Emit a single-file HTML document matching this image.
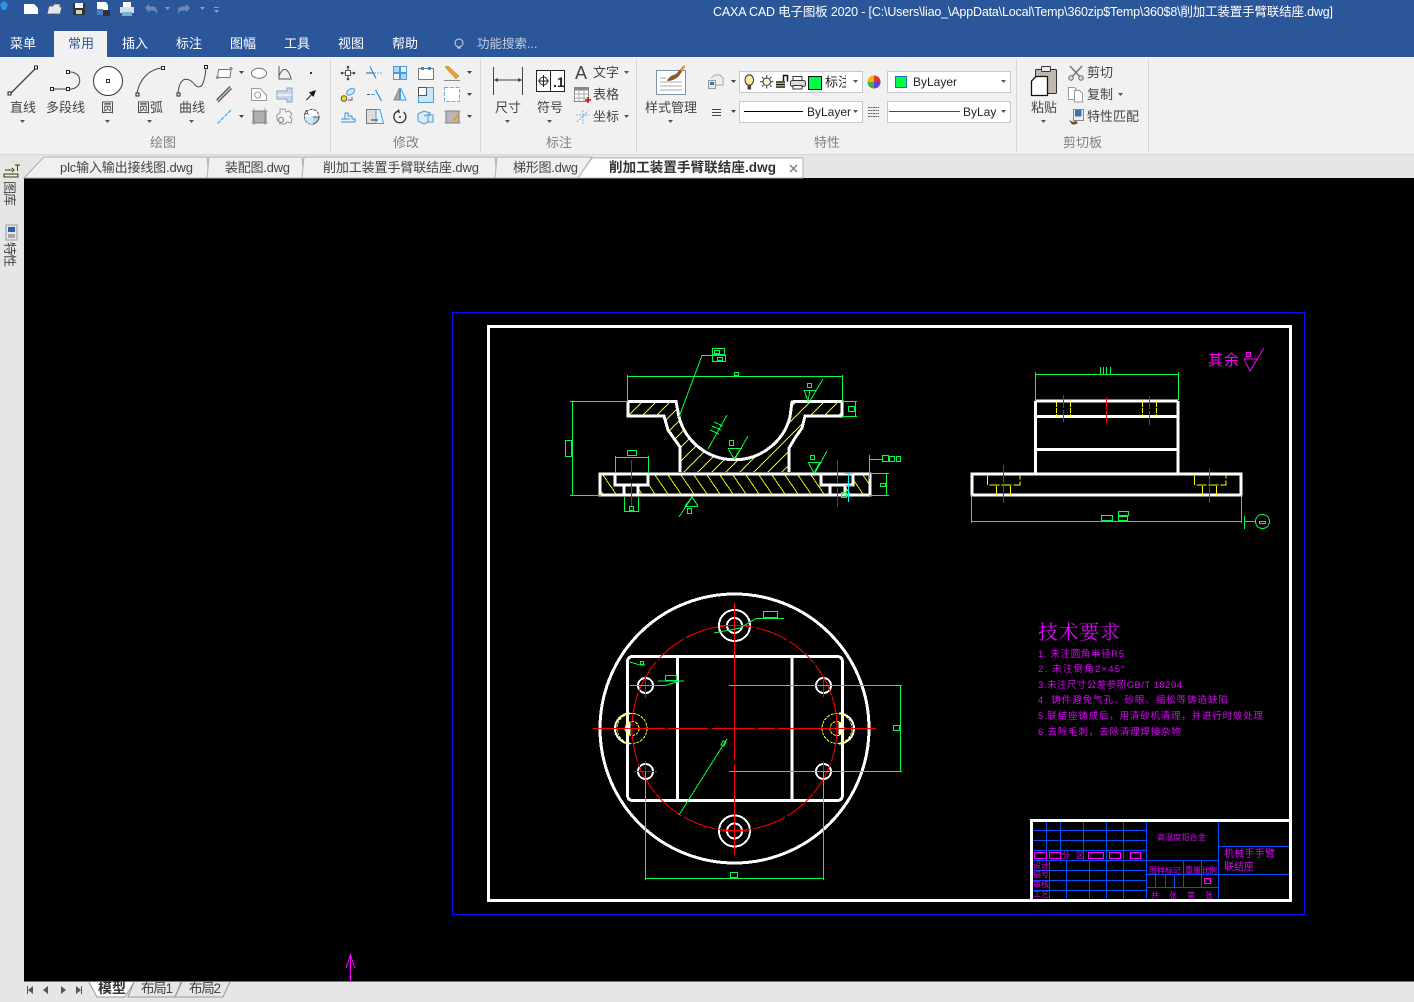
<!DOCTYPE html>
<html><head><meta charset="utf-8"><style>
html,body{margin:0;padding:0;background:#000;overflow:hidden}
svg{display:block;position:absolute;left:0;top:0}
text{font-family:"Liberation Sans","Noto Sans CJK SC",sans-serif}
.u{font-size:13px;fill:#444}
.g{font-size:13px;fill:#808080}
.m{font-size:13px;fill:#fff}
.t{font-size:13px;fill:#444}
.d{fill:#555}
.k{fill:none;stroke:#555;stroke-width:1}
.b{fill:none;stroke:#3a8fd0;stroke-width:1}
</style></head><body>
<svg width="1414" height="1002" viewBox="0 0 1414 1002" xmlns="http://www.w3.org/2000/svg">
<defs>
<clipPath id="hu"><path d="M628,402H677L680,418A57.400,57.400 0 0 0 790,418L792,402H842V416H805L802,428L795,438L789,448V472H680V447L668,430L664,417H628Z"/></clipPath>
<clipPath id="hl"><path d="M601,475H615V486H624V494H601ZM648,475H821V486H830V494H638V486H648ZM853,475H869V494H845V486H853Z"/></clipPath>
<clipPath id="c1"><rect x="825" y="72" width="21" height="20"/></clipPath>
<clipPath id="c2"><rect x="960" y="102" width="37" height="20"/></clipPath>
</defs>
<!-- chrome backgrounds -->
<rect width="1414" height="57" fill="#2b579a"/>
<rect y="57" width="1414" height="98" fill="#f1f1f1"/>
<rect y="154" width="1414" height="1" fill="#d8d8d8"/>
<rect y="155" width="1414" height="23" fill="#e6e6e6"/>
<rect y="178" width="24" height="824" fill="#e6e6e6"/>
<rect x="24" y="178" width="1390" height="803" fill="#000"/>
<rect y="981" width="1414" height="21" fill="#e6e6e6"/>
<rect x="24" y="981" width="1390" height="1" fill="#777"/>

<!-- quick access -->
<path d="M0,4l4-3 4,3-2,6h-4z" fill="#2f8fe0"/>
<path d="M24,4h10l4,4v6H24z" fill="#fff"/>
<path d="M47,14l2-8h4l1-2h6v3h2l-2,7z" fill="#dfe6ef" stroke="#555" stroke-width=".7"/>
<rect x="73" y="3" width="12" height="12" fill="#333"/><rect x="75" y="3" width="8" height="5" fill="#fff"/><rect x="76" y="10" width="6" height="4" fill="#ccc"/>
<path d="M97,2h9l2,3v5H97z" fill="#fff"/><rect x="97" y="9" width="6" height="6" fill="#4a7fc0"/><rect x="103" y="10" width="7" height="6" fill="#333"/>
<rect x="123" y="2" width="8" height="5" fill="#fff"/><rect x="120" y="7" width="14" height="6" fill="#d9dde3"/><rect x="122" y="12" width="10" height="4" fill="#6fb5d8"/>
<path d="M145,8l4-4v2.500h4c3,0 4,2 4,5v3c-1-3-2-4-4-4h-4v2z" fill="#6c88b3"/>
<path d="M165,7h5l-2.500,3z" fill="#8aa0c4"/>
<path d="M190,8l-4-4v2.500h-4c-3,0-4,2-4,5v3c1-3 2-4 4-4h4v2z" fill="#6c88b3"/>
<path d="M200,7h5l-2.500,3z" fill="#8aa0c4"/>
<path d="M214,7h5v1h-5zM214,10h5l-2.500,3z" fill="#8aa0c4"/>
<text x="713" y="16" font-size="12.500" fill="#fff" textLength="620">CAXA CAD 电子图板 2020 - [C:\Users\liao_\AppData\Local\Temp\360zip$Temp\360$8\削加工装置手臂联结座.dwg]</text>

<!-- menu tabs -->
<rect x="54" y="31" width="53" height="26" fill="#f1f1f1"/>
<text class="m" x="10" y="48">菜单</text>
<text x="68" y="48" font-size="13" fill="#2b579a">常用</text>
<text class="m" x="122" y="48">插入</text><text class="m" x="176" y="48">标注</text><text class="m" x="230" y="48">图幅</text><text class="m" x="284" y="48">工具</text><text class="m" x="338" y="48">视图</text><text class="m" x="392" y="48">帮助</text>
<circle cx="459" cy="43" r="4" fill="none" stroke="#c8d2e2"/><path d="M457,48h4" stroke="#c8d2e2"/>
<text x="477" y="48" font-size="12.500" fill="#c4cede">功能搜索...</text>

<!-- ribbon separators -->
<g fill="#d6d6d6"><rect x="330" y="60" width="1" height="92"/><rect x="480" y="60" width="1" height="92"/><rect x="636" y="60" width="1" height="92"/><rect x="1016" y="60" width="1" height="92"/><rect x="1148" y="60" width="1" height="92"/></g>

<!-- draw group icons -->
<path d="M10,94L36,68" stroke="#444" stroke-width="1.300"/>
<g fill="#fff" stroke="#222"><rect x="8" y="92" width="3" height="3"/><rect x="34.500" y="66" width="3" height="3"/>
<rect x="50.500" y="87.500" width="3" height="3"/><rect x="66.500" y="87.500" width="3" height="3"/><rect x="66.500" y="70.500" width="3" height="3"/>
<rect x="136" y="93" width="3" height="3"/><rect x="161.500" y="66.500" width="3" height="3"/><rect x="177" y="93" width="3" height="3"/><rect x="204.500" y="65.500" width="3" height="3"/></g>
<path d="M54,89H66M70,72C83,72 83,89 70,89" fill="none" stroke="#444"/>
<circle cx="108" cy="81" r="14.500" fill="#fff" stroke="#333"/><rect x="106.500" y="79.500" width="3" height="3" fill="#fff" stroke="#333"/>
<path d="M137,93C140,78 150,69 162,68" fill="none" stroke="#444"/>
<path d="M178,93C180,74 190,78 195,85C203,92 205,78 206,68" fill="none" stroke="#444"/>
<text class="u" x="10" y="112">直线</text><text class="u" x="46" y="112">多段线</text><text class="u" x="101" y="112">圆</text><text class="u" x="137" y="112">圆弧</text><text class="u" x="179" y="112">曲线</text>
<path class="d" d="M20,120h5l-2.500,3zM105,120h5l-2.500,3zM147,120h5l-2.500,3zM189,120h5l-2.500,3z"/>
<!-- small draw -->
<path d="M218.500,69.500H231L230,77.500H217.500Z" fill="#fff" stroke="#777"/><circle cx="217.500" cy="77.500" r="1" fill="#fff" stroke="#777"/><circle cx="231" cy="68.500" r="1" fill="#fff" stroke="#777"/>
<path d="M239,71h5l-2.500,3zM239,115h5l-2.500,3z" fill="#444"/>
<ellipse cx="259" cy="73.300" rx="7.500" ry="5" fill="#fff" stroke="#777"/>
<path class="k" d="M279,66V79H292M279,76C283,66 288,68 291,78"/>
<rect x="310" y="72" width="2" height="2" fill="#333"/>
<path d="M216.500,100L230,86.500M218,102L231.500,88.500" stroke="#555" stroke-width="1.300"/><path d="M217,101L231,87.500" stroke="#ccc" stroke-width=".6"/>
<path d="M251.500,88.500H260L266.500,95V100.500H251.500Z" fill="#fff" stroke="#999"/><circle cx="257.700" cy="95" r="3" fill="none" stroke="#999"/>
<path d="M277,91H287V88H292V102H287V99H277Z" fill="#c8d8ea" stroke="#8fa3b8"/><path d="M277,95h15" stroke="#fff"/>
<path d="M306.500,100L313,93" stroke="#222" stroke-width="1"/><path d="M316,90l-7,2.500 4.500,4.500z" fill="#111"/>
<path d="M217.500,123.500L231,110" stroke="#3aa8ee" stroke-width="1.200" stroke-dasharray="4 1"/>
<rect x="253" y="111" width="13" height="12" fill="#b0b0b0" stroke="#8a8a8a"/><path d="M251,111h17M251,123h17M254,108v17M265,108v17" stroke="#777" stroke-width=".6"/>
<path d="M280,109h5l1,3 3-1 3,3-2,3 2,2-1,4-4-1-2,2h-5l-1-3-2-1v-5l3-2z" fill="#f1f1f1" stroke="#999"/><circle cx="281" cy="120" r="2.500" fill="#f1f1f1" stroke="#777"/>
<circle cx="311.700" cy="116.700" r="7.300" fill="#fff" stroke="#555" stroke-dasharray="3 1"/><path d="M311.700,117V124A7.300,7.300 0 0 0 319,117Z" fill="#a9d6f3" stroke="#555"/><path d="M305,116.700A7,7 0 0 0 311.700,124H313V116.700Z" fill="#cfe9f9"/>
<text x="304" y="115" font-size="7" fill="#333">A</text>
<text class="g" x="150" y="147">绘图</text>

<!-- modify icons -->
<path class="k" d="M342,73h3M351,73h3M348,67v3M348,76v3"/>
<rect x="345.500" y="70.500" width="5" height="5" fill="#fff" stroke="#555"/>
<g fill="#444"><circle cx="342" cy="73" r="1.300"/><circle cx="354" cy="73" r="1.300"/><circle cx="348" cy="67" r="1.300"/><circle cx="348" cy="79" r="1.300"/></g>
<path d="M366,73h8" stroke="#2c5f96"/><path d="M374,73h8" stroke="#5aaee8" stroke-dasharray="2 1"/><path d="M370,66.500l6,12" stroke="#1f7fc8"/>
<g fill="#a9d6f3" stroke="#4d9cd8"><rect x="393.500" y="66.500" width="6" height="6"/><rect x="400.500" y="73.500" width="6" height="6"/></g><g fill="#e8f4fc" stroke="#4d9cd8"><rect x="400.500" y="66.500" width="6" height="6"/><rect x="393.500" y="73.500" width="6" height="6"/></g>
<rect x="418.500" y="68.500" width="15" height="11" fill="#fff" stroke="#777"/><path d="M421,67h3v3h-3zM428,67h3v3h-3z" fill="#2c8cd6"/>
<path d="M445,67l3-1 11,10-3,3z" fill="#f0a030" stroke="#9a6a20" stroke-width=".5"/><path d="M444,80.500h16" stroke="#888"/>
<path d="M467,71h5l-2.500,3zM467,93h5l-2.500,3zM467,115h5l-2.500,3z" fill="#444"/>
<circle cx="344" cy="98.500" r="2.800" fill="#f5e100" stroke="#555"/><ellipse cx="350.700" cy="91.700" rx="4.500" ry="2.700" transform="rotate(-35 350.700 91.700)" fill="#cde6f7" stroke="#4d9cd8"/><path d="M348,100h4v-3" fill="none" stroke="#a33"/>
<path d="M367,94.500h3" stroke="#2c5f96"/><path d="M371,94.500h4" stroke="#5aaee8"/><path d="M375.500,90l6,11" stroke="#1f7fc8"/>
<path d="M399.500,88v12h-5.500z" fill="#aaa" stroke="#888"/><path d="M400.500,88l5.500,12h-5.500z" fill="#e8f4fc" stroke="#4d9cd8"/>
<rect x="418.500" y="87.500" width="15" height="15" fill="#cde6f7" stroke="#4d9cd8"/><rect x="418.500" y="87.500" width="8" height="8" fill="#fff" stroke="#555"/>
<rect x="444.500" y="87.500" width="15" height="14" fill="#fff" stroke="#6cb0e6" stroke-dasharray="4 1.500"/>
<path d="M341,122h14M341,119h9M345,119v-6h3v3h4v3h3v3" fill="none" stroke="#3a8fd0"/>
<rect x="366.500" y="109.500" width="10" height="14" fill="#ddd" stroke="#777"/><path d="M376,109.500h4l3.500,14H376Z" fill="#e8f4fc" stroke="#4d9cd8"/><path d="M371,120h7" stroke="#333"/>
<path d="M397,111.500A6,6 0 1 0 403.500,112" fill="none" stroke="#333" stroke-width="1.300"/><path d="M399,109l-3,3 4,1z" fill="#333"/><circle cx="400" cy="117" r="1" fill="#333"/>
<path d="M418,114l6-3 6,2v8l-6,3-6-3zM424,116l6-2" fill="#d8ecf9" stroke="#4d9cd8"/><rect x="428" y="115" width="5" height="7" fill="#d8ecf9" stroke="#4d9cd8"/>
<rect x="446" y="111" width="13" height="12" fill="#b8b8b8" stroke="#777"/><path d="M444,111h17M444,123h17" stroke="#888" stroke-width=".6"/><path d="M453,121l6-7" stroke="#e79a20" stroke-width="2"/>
<text class="g" x="393" y="147">修改</text>

<!-- dim group -->
<path d="M493.500,67v28M522.500,67v28M494,80h28" fill="none" stroke="#444"/><path d="M494,80l4-2v4zM522,80l-4-2v4z" fill="#444"/>
<rect x="536.500" y="70.500" width="28" height="21" fill="#fff" stroke="#222"/><path d="M550.500,70v21" stroke="#222"/><circle cx="543.500" cy="81" r="4" fill="none" stroke="#222"/><path d="M538,81h11M543.500,75v12" stroke="#222"/>
<text x="553" y="87" font-size="14" font-weight="bold" fill="#222">.1</text>
<text class="u" x="495" y="112">尺寸</text><text class="u" x="537" y="112">符号</text>
<path class="d" d="M505,120h5l-2.500,3zM547,120h5l-2.500,3z"/>
<text x="575" y="79" font-size="18" fill="#444">A</text>
<text class="u" x="593" y="77">文字</text><text class="u" x="593" y="99">表格</text><text class="u" x="593" y="121">坐标</text>
<path class="d" d="M624,71h5l-2.500,3zM624,115h5l-2.500,3z"/>
<rect x="574.500" y="87.500" width="14" height="14" fill="#fff" stroke="#888"/><rect x="574.500" y="87.500" width="14" height="3" fill="#888"/><path d="M574,94h14M574,98h14M579,90v11M584,90v11" stroke="#aaa"/><path d="M585,100h6M588,97v6" stroke="#d00" stroke-width="1.500"/>
<path d="M577,122l3-3 8,-8M576,115h13M583,110v14" stroke="#7fb4dc" stroke-dasharray="2 1" fill="none"/>
<text class="g" x="546" y="147">标注</text>

<!-- style -->
<rect x="656.500" y="70.500" width="29" height="24" fill="#fff" stroke="#7b93ad"/><path d="M660,78h6M660,82h22M660,86h22M660,90h22" stroke="#a9a9a9"/>
<path d="M667,81c2-5 6-6 9-7l8-9 1,2-6,9c-3,3-7,5-12,5z" fill="#8a5a2b"/><path d="M680,69.500l4-4.500 1,2-3,4.500z" fill="#e89a20"/>
<text class="u" x="645" y="112">样式管理</text><path class="d" d="M668,120h5l-2.500,3z"/>
<path d="M711,78l4-3h5l3,3v7h-8" fill="#eee" stroke="#aaa"/><rect x="708.500" y="80.500" width="7" height="8" fill="#e8e8e8" stroke="#999"/><rect x="710" y="82" width="4" height="3" fill="#3f6fb0"/>
<path d="M731,80h5l-2.500,3zM731,110h5l-2.500,3z" fill="#444"/>
<path d="M712,109.500h9M712,112.500h9M712,115.500h9" stroke="#444"/>
<rect x="739.500" y="71.500" width="123" height="21" fill="#fff" stroke="#c8c8c8"/><rect x="887.500" y="71.500" width="123" height="21" fill="#fff" stroke="#c8c8c8"/><rect x="739.500" y="101.500" width="123" height="21" fill="#fff" stroke="#c8c8c8"/><rect x="887.500" y="101.500" width="123" height="21" fill="#fff" stroke="#c8c8c8"/>
<ellipse cx="749.300" cy="80" rx="4.300" ry="5.300" fill="#f5e9a0" stroke="#333"/><path d="M747.500,85.500h3.600v4h-3.600z" fill="#444"/>
<circle cx="766.700" cy="81.700" r="3.700" fill="#fff8d0" stroke="#333"/><path d="M766.700,75v2.500M766.700,86v2.500M760,81.700h2.500M771,81.700h2.500M762,77l1.500,1.500M770,85l1.500,1.500M771.500,77L770,78.500M762,86.500l1.500-1.500" stroke="#333"/>
<rect x="776" y="81" width="9" height="7" fill="#d8c860"/><path d="M776,82h9M776,84.500h9M776,87h9" stroke="#111" stroke-width="1.200"/><path d="M783.500,81v-5.500h4v6" fill="none" stroke="#111" stroke-width="1.500"/>
<rect x="793" y="76.500" width="9" height="4" fill="#fff" stroke="#333"/><rect x="790.500" y="80.500" width="15" height="6" rx="2" fill="#ddd" stroke="#333"/><rect x="793" y="85.500" width="9" height="3.500" fill="#fff" stroke="#333"/>
<rect x="808.500" y="76.500" width="13" height="13" fill="#00ff40" stroke="#111"/>
<text x="825" y="86.500" font-size="13" fill="#222" clip-path="url(#c1)">标注</text>
<path class="d" d="M853,80h5l-2.500,3zM1001,80h5l-2.500,3zM853,110h5l-2.500,3zM1001,110h5l-2.500,3z" fill="#888"/>
<circle cx="874" cy="82" r="6.500" fill="#f5b400"/><path d="M874,82L874,75.500A6.500,6.500 0 0 1 880.500,82z" fill="#d33"/><path d="M874,82L880.500,82A6.500,6.500 0 0 1 874,88.500z" fill="#6a3fd0"/><path d="M874,82L874,88.500A6.500,6.500 0 0 1 867.500,82z" fill="#3fb04f"/>
<rect x="895.500" y="76.500" width="11" height="11" fill="#00ff40" stroke="#1a6fc0"/>
<text x="913" y="86" font-size="12" fill="#222">ByLayer</text>
<rect x="744" y="111" width="59" height="1" fill="#000"/><text x="807" y="116" font-size="12" fill="#222">ByLayer</text>
<path d="M868,107.500h11M868,110.500h11M868,113.500h11M868,116.500h11" stroke="#666" stroke-dasharray="2 .5"/>
<rect x="889" y="111" width="71" height="1" fill="#ff0000"/><text x="963" y="116" font-size="12" fill="#222" clip-path="url(#c2)">ByLayer</text>
<text class="g" x="814" y="147">特性</text>

<!-- clipboard -->
<rect x="1035.500" y="69.500" width="21" height="24" rx="1" fill="#bfb8ad" stroke="#333"/><rect x="1041.500" y="66.500" width="9" height="5" rx="1" fill="#eee" stroke="#333"/>
<path d="M1036,76.500h11.500v19h-16v-14.500z" fill="#fff" stroke="#111" stroke-width="1.300"/>
<text class="u" x="1031" y="112">粘贴</text><path class="d" d="M1041,120h5l-2.500,3z" fill="#444"/>
<path d="M1070,66l11,12M1082,66l-11,12" stroke="#777" stroke-width="1.500"/><circle cx="1071" cy="78" r="2.200" fill="#ddd" stroke="#666"/><circle cx="1081" cy="78" r="2.200" fill="#ddd" stroke="#666"/>
<path d="M1068.500,87.500h6l2,2v10h-8z" fill="#fff" stroke="#999"/><path d="M1074.500,90.500h5l3,3v8.500h-8z" fill="#fff" stroke="#999"/>
<rect x="1073.500" y="109.500" width="10" height="11" fill="#eee" stroke="#888"/><rect x="1075" y="110" width="6.500" height="6.500" fill="#3f6fb0"/><path d="M1069,120l4,2 3,-1 2,2-3,1.500h-3z" fill="#7a4a20"/>
<text class="u" x="1087" y="77">剪切</text><text class="u" x="1087" y="99">复制</text><text class="u" x="1087" y="121">特性匹配</text>
<path class="d" d="M1118,93h5l-2.500,3z" fill="#444"/>
<text class="g" x="1063" y="147">剪切板</text>

<!-- doc tabs -->
<path d="M24,178L44,157H207l2,21z" fill="#f0f0f0" stroke="#b0b0b0"/>
<path d="M207,178l2-21H302l2,21z" fill="#f0f0f0" stroke="#b0b0b0"/>
<path d="M302,178l2-21H495l2,21z" fill="#f0f0f0" stroke="#b0b0b0"/>
<path d="M495,178l2-21H592l-14,21z" fill="#f0f0f0" stroke="#b0b0b0"/>
<path d="M578,178l14-20H803v20z" fill="#fff" stroke="#b0b0b0"/>
<text class="t" x="60" y="172" textLength="133">plc输入输出接线图.dwg</text>
<text class="t" x="225" y="172" textLength="65">装配图.dwg</text>
<text class="t" x="323" y="172" textLength="156">削加工装置手臂联结座.dwg</text>
<text class="t" x="513" y="172" textLength="65">梯形图.dwg</text>
<text x="609" y="172" font-size="13.500" font-weight="bold" fill="#333" textLength="167">削加工装置手臂联结座.dwg</text>
<path d="M790,165l7,7M797,165l-7,7" stroke="#777" stroke-width="1.300"/>

<!-- left panel -->
<rect x="4" y="165" width="16" height="14" fill="#ecebd6"/>
<path d="M5,170h7M12,168l2,2-2,2M15,165h5M17.500,165v6M4,174h14v3H4z" fill="none" stroke="#333"/>
<text transform="translate(5,181) rotate(90)" font-size="13" fill="#444" textLength="25">图库</text>
<rect x="6" y="225" width="11" height="15" fill="#e8e8e8" stroke="#999"/><rect x="8" y="227" width="7" height="5" fill="#2f5fb0"/><path d="M8,235h7M8,237h7" stroke="#666"/>
<text transform="translate(5,242) rotate(90)" font-size="13" fill="#444" textLength="25">特性</text>

<!-- bottom tabs -->
<path class="d" d="M27,986v8h1v-8zM33,986v8l-5-4zM48,986v8l-5-4zM61,986v8l5-4zM76,986v8l5-4zM81,986v8h1v-8z" fill="#888"/>
<path d="M89,982l8,15h28l9-15z" fill="#fff"/>
<path d="M134,982l-6,15h47l7-15M181,982l-6,15h48l7-15" fill="#e6e6e6" stroke="#999"/>
<path d="M89,982l8,15h28l9-15" fill="none" stroke="#999"/>
<text x="98" y="993" font-size="14" font-weight="bold" fill="#333">模型</text>
<text x="141" y="993" font-size="13.500" fill="#444" textLength="32">布局1</text>
<text x="189" y="993" font-size="13.500" fill="#444" textLength="32">布局2</text>

<!-- canvas -->
<g shape-rendering="crispEdges" fill="none">
<path d="M350.500,981V955M346,968l4.500-13 4.500,13" stroke="#f0f"/>
<rect x="452.500" y="312.500" width="852" height="602" stroke="#0a0aff"/>
<rect x="488.500" y="326.500" width="802" height="574" stroke="#fff" stroke-width="3"/>

<!-- FRONT VIEW hatches -->
<g clip-path="url(#hu)"><path stroke="#e8f000" d="M550,480l80-80M564,480l80-80M578,480l80-80M592,480l80-80M606,480l80-80M620,480l80-80M634,480l80-80M648,480l80-80M662,480l80-80M676,480l80-80M690,480l80-80M704,480l80-80M718,480l80-80M732,480l80-80M746,480l80-80M760,480l80-80M774,480l80-80M788,480l80-80M802,480l80-80M816,480l80-80M830,480l80-80"/></g>
<g clip-path="url(#hl)"><path stroke="#e8f000" d="M590,475l13,19M603,475l13,19M616,475l13,19M629,475l13,19M642,475l13,19M655,475l13,19M668,475l13,19M681,475l13,19M694,475l13,19M707,475l13,19M720,475l13,19M733,475l13,19M746,475l13,19M759,475l13,19M772,475l13,19M785,475l13,19M798,475l13,19M811,475l13,19M824,475l13,19M837,475l13,19M850,475l13,19M863,475l13,19"/></g>
<!-- front view outline -->
<g stroke="#fff" stroke-width="3">
<path d="M628,401.500H676L679,417A57.400,57.400 0 0 0 790,417L792,402L794,401.500H842V416H805L802,428L795,438L789,448V472M628,401.500V416H664L668,430L680,447V472"/>
<path d="M600,474H870V495H600ZM615,474V485H648V474M624,485V495M638,485V495M821,474V485H853V474M830,485V495M845,485V495"/>
</g>
<g stroke="#f00">
<path d="M631.500,460V479M631.500,483V506M837.500,460V484M837.500,488V507"/>
</g>
<path d="M848.500,473V502M845,473.500H853M845,485.500H853" stroke="#0ff"/>
<g stroke="#00ff44">
<path d="M627.500,401V375M627,376.500H842.500M842.500,375V401"/><rect x="734.500" y="372.500" width="4" height="3"/>
<path d="M570,401.500H627M572.500,401V495M570,495.500H601"/><rect x="565.500" y="440.500" width="6" height="16"/>
<path d="M842,401.500H857M842,416.500H857M855.500,401V417"/><rect x="848.500" y="406.500" width="6" height="5"/>
<path d="M679,417L702,355.500H712"/><rect x="712.500" y="348.500" width="12" height="6"/><rect x="712.500" y="355.500" width="13" height="6"/><rect x="714.500" y="350.500" width="5" height="3"/><rect x="717.500" y="357.500" width="5" height="3"/>
<path d="M804,390.500H816M804,390L808,401L810,390M810,401L823,379"/><rect x="807.500" y="383.500" width="4" height="4"/>
<path d="M728,448.500H742M728,448L734,459L741,448M735,459L748,436"/><rect x="729.500" y="440.500" width="4" height="5"/>
<path d="M708,449L727,415M710,430L719,434M712,426L721,430M714,422L723,426"/>
<path d="M808,462.500H822M808,462L814,473L820,462M815,473L827,451"/><rect x="810.500" y="455.500" width="4" height="4"/>
<path d="M869.500,455V479M869,459.500H882"/><rect x="882.500" y="455.500" width="6" height="6"/><rect x="889.500" y="456.500" width="5" height="5"/><rect x="896.500" y="456.500" width="4" height="5"/>
<path d="M869,473.500H889M869,495.500H889M886.500,473V496"/><rect x="880.500" y="483.500" width="5" height="3"/>
<path d="M615.500,456V473M648.500,456V473M615,457.500H648"/><rect x="627.500" y="450.500" width="9" height="5"/>
<path d="M624.500,497V512M638.500,497V512M624,511.500H638"/><rect x="629.500" y="506.500" width="4" height="4"/>
<path d="M679,517L692,497M685,506.500H698M685,506L692,497L698,506"/><rect x="687.500" y="508.500" width="4" height="5"/>
<rect x="841.500" y="492.500" width="5" height="5"/>
</g>

<!-- SIDE VIEW -->
<g stroke="#fff" stroke-width="3">
<path d="M1035.500,401H1178M1035.500,401V473M1178,401V473M1036,416.500H1178M1036,449.500H1178"/>
<path d="M972,474H1241V495H972Z"/>
</g>
<g stroke="#ff0">
<path d="M1056.500,402V417M1070.500,402V417M1142.500,402V417M1156.500,402V417" stroke-dasharray="5 1"/>
<path d="M987.500,475V485H1020V475M996.500,486V495M1010.500,486V495M1194.500,475V485H1226V475M1202.500,486V495M1216.500,486V495" stroke-dasharray="10 2"/>
</g>
<g stroke="#f00">
<path d="M1063.500,395V408M1063.500,410V422M1106.500,397V409M1106.500,411V423M1149.500,396V409M1149.500,411V425M1003.500,465V483M1003.500,486V503M1209.500,468V484M1209.500,487V503"/>
</g>
<g stroke="#00ff44">
<path d="M1035.500,372V401M1178.500,372V400M1036,374.500H1178M1100.500,367V374M1103.500,367V374M1106.500,367V374M1110.500,367V374"/>
<path d="M971.500,495V523M1241.500,495V523M972,521.500H1241"/><rect x="1101.500" y="515.500" width="11" height="5"/><rect x="1118.500" y="511.500" width="10" height="4"/><rect x="1118.500" y="516.500" width="9" height="4"/>
<path d="M1244.500,516V529M1245,521.500H1255"/><circle cx="1262.500" cy="521.500" r="7"/><rect x="1259.500" y="521.500" width="6" height="2"/>
</g>
<g stroke="#f0f"><path d="M1244,359H1258M1244,359L1250,371L1264,348"/><rect x="1246.500" y="352.500" width="4" height="4"/></g>

<!-- TOP VIEW -->
<g stroke="#fff">
<circle cx="734.500" cy="728.500" r="134.500" stroke-width="3"/>
<rect x="627.500" y="656.500" width="215" height="144" rx="5" stroke-width="3"/>
<path d="M677.500,657V800M792,657V800" stroke-width="3"/>
<circle cx="734.500" cy="625.500" r="15.500" stroke-width="2"/><circle cx="734.500" cy="625.500" r="7.500" stroke-width="2"/>
<circle cx="734.500" cy="831" r="15.500" stroke-width="2"/><circle cx="734.500" cy="831" r="7.500" stroke-width="2"/>
<circle cx="645.500" cy="685.500" r="7.500" stroke-width="2"/><circle cx="823.500" cy="685.500" r="7.500" stroke-width="2"/><circle cx="645.500" cy="771.500" r="7.500" stroke-width="2"/><circle cx="823.500" cy="771.500" r="7.500" stroke-width="2"/>
<path d="M630,713.500A15,15 0 0 0 630,743.500M839,713.500A15,15 0 0 1 839,743.500" stroke-width="2"/>
<path d="M630,722A7,7 0 0 0 630,735ZM839,722A7,7 0 0 1 839,735Z" fill="#fff"/>
</g>
<g stroke="#ff0" stroke-dasharray="3 1"><circle cx="632" cy="728.500" r="15"/><circle cx="632" cy="728.500" r="7"/><circle cx="837" cy="728.500" r="15"/><circle cx="837" cy="728.500" r="7"/></g>
<g stroke="#f00">
<circle cx="734.500" cy="728" r="102.500" stroke-dasharray="34 2"/>
<path d="M593,728.500H665M668,728.500H708M712,728.500H755M758,728.500H775M778,728.500H876M734.500,603V683M734.500,686V760M734.500,764V855"/>
<path d="M720,625.500H750M720,831H750M637,685.500H656M645.500,677V698M811,685.500H832M823.500,677V697M634,771.500H657M645.500,761V781M812,771.500H832M823.500,761V781"/>
</g>
<g stroke="#00ff44">
<path d="M729,685.500H902M729,771.500H902M900.500,686V771"/><rect x="893.500" y="725.500" width="6" height="5"/>
<path d="M645.500,772V880M823.500,772V880M646,878.500H823"/><rect x="730.500" y="872.500" width="7" height="5"/>
<path d="M679,815L727,739M723,741l-2,4 3,1 2-4z"/>
<path d="M714,633L740,628L756,618.500H784"/><rect x="763.500" y="611.500" width="14" height="6"/>
<path d="M630,662L640,665H645"/><rect x="640.500" y="661.500" width="3" height="3"/>
<path d="M630,685.500H665L680,681M658,681H684"/><rect x="665.500" y="675.500" width="11" height="5"/>
</g>

<!-- TITLE BLOCK -->
<g stroke="#0050ff">
<path d="M1033,830.500H1146M1033,840.500H1146M1033,850.500H1146M1033,860.500H1218M1033,870.500H1146M1033,880.500H1146M1033,890.500H1146"/>
<path d="M1046.500,822V860M1060.500,822V860M1083.500,822V860M1106.500,822V899M1123.500,822V899M1146.500,822V899M1049.500,860V899M1066.500,860V899M1089.500,860V899"/>
<path d="M1218.500,822V899M1146,874.500H1290M1146,887.500H1218M1218,846.500H1290"/>
<path d="M1155.500,875V887M1165.500,875V887M1174.500,875V887M1183.500,860V887M1201.500,860V887"/>
</g>
<rect x="1031.500" y="820.500" width="259" height="80" stroke="#fff" stroke-width="3"/>
<g stroke="#f0f"><rect x="1034.500" y="852.500" width="12" height="6"/><rect x="1049.500" y="852.500" width="11" height="6"/><rect x="1088.500" y="852.500" width="15" height="6"/><rect x="1109.500" y="852.500" width="11" height="6"/><rect x="1130.500" y="852.500" width="10" height="6"/><rect x="1204.500" y="878.500" width="6" height="5"/></g>
</g>
<!-- drawing texts -->
<g fill="#e000ff">
<text x="1208" y="365" font-size="15" textLength="31" fill="#f0f">其余</text>
<text x="1038" y="639" font-size="20" textLength="82" style='font-family:"Liberation Serif","Noto Serif CJK SC",serif'>技术要求</text>
<g font-size="9.500">
<text x="1038" y="657" textLength="86">1.  未注圆角半径R5</text>
<text x="1038" y="672" textLength="87">2.  未注倒角2×45°</text>
<text x="1038" y="688" textLength="144">3.未注尺寸公差参照GB/T 18204</text>
<text x="1038" y="703" textLength="190">4.  铸件避免气孔、砂眼、缩松等铸造缺陷</text>
<text x="1038" y="719" textLength="225">5.联结座铸成后，用清砂机清理，并进行时效处理</text>
<text x="1038" y="735" textLength="143">6.去除毛刺，去除清理焊接杂物</text>
</g>
<g font-size="8">
<text x="1157" y="840" textLength="49">高温度铝合金</text>
<text x="1062" y="858" textLength="22">分 区</text>
<text x="1033" y="868">设计</text><text x="1033" y="877">描号</text><text x="1033" y="887">审核</text><text x="1033" y="897">工艺</text>
<text x="1149" y="873" textLength="32">图样标记</text><text x="1185" y="873" textLength="16">重量</text><text x="1202" y="873" textLength="15">比例</text>
<text x="1151" y="898" textLength="62">共  张  第  张</text>
</g>
<text x="1224" y="857" font-size="10" textLength="51">机械手手臂</text>
<text x="1224" y="870" font-size="10" textLength="30">联结座</text>
</g>
</svg>
</body></html>
